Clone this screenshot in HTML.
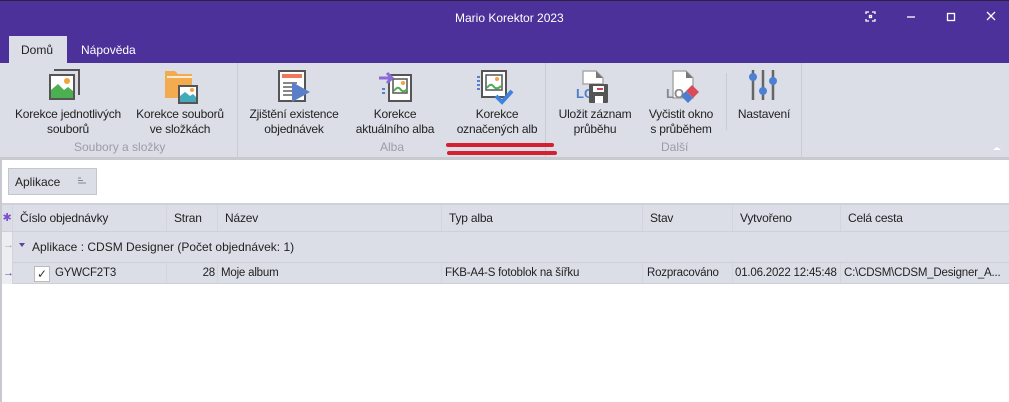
<!DOCTYPE html>
<html><head><meta charset="utf-8"><style>
*{margin:0;padding:0;box-sizing:border-box}
body{width:1009px;height:402px;overflow:hidden;background:#fff;font-family:"Liberation Sans",sans-serif;font-size:12px;color:#222;position:relative}
.abs{position:absolute}
.title{left:0;top:0;width:1009px;height:63px;background:#4b3199;border-top:1px solid #2a2040}
.t{color:#fff;font-size:12px}
.ribbon{left:0;top:63px;width:1009px;height:94px;background:#dcdee7}
.lbl{text-align:center;font-size:12px;line-height:15px;color:#222;white-space:nowrap;letter-spacing:-0.2px}
.grp{color:#9a9ca6;font-size:12px}
.sep{background:#c8cad4;width:1px}
.cell{position:absolute;height:100%;border-right:1px solid #d4d5dc;padding-left:7px;white-space:nowrap;overflow:hidden}
.grid{font-size:11.5px;letter-spacing:-0.2px}
</style></head><body>
<div class="abs title"></div>
<div class="abs t" style="left:455px;top:11px">Mario Korektor 2023</div>
<!-- window controls -->
<svg class="abs" style="left:864px;top:10px" width="150" height="15"><g stroke="#fff" stroke-width="1.3" fill="none">
<path d="M2 4V2h3M8 2h3v2M11 9v2H8M5 11H2V9"/><rect x="5.5" y="5.5" width="2" height="2"/>
<path d="M43 7h8"/><rect x="83.5" y="3.5" width="7" height="7"/><path d="M123 2l8 8M131 2l-8 8"/></g></svg>
<div class="abs" style="left:9px;top:36px;width:58px;height:27px;background:#dcdee7"></div>
<div class="abs" style="left:21px;top:43px;font-size:12px">Domů</div>
<div class="abs t" style="left:81px;top:43px">Nápověda</div>
<div class="abs ribbon"></div>
<div class="abs sep" style="left:237px;top:63px;height:94px"></div>
<div class="abs sep" style="left:545px;top:63px;height:94px"></div>
<div class="abs sep" style="left:726px;top:73px;height:57px"></div>
<div class="abs sep" style="left:801px;top:63px;height:94px"></div>
<!-- icons -->
<svg class="abs" style="left:48px;top:69px" width="36" height="36"><path d="M6 1h25v25" stroke="#555" stroke-width="2" fill="none"/><rect x="2" y="6" width="24" height="24" fill="#fff" stroke="#555" stroke-width="2"/><path d="M3 29v-8l7-6 6 6 4-3 5 4v7z" fill="#4caf50"/><circle cx="19" cy="12" r="3" fill="#f2a33a"/></svg>
<svg class="abs" style="left:162px;top:69px" width="36" height="36"><path d="M3 2h10l3 3h14v24H3z" fill="#f2ac4f"/><path d="M5 8h25" stroke="#fff" stroke-width="1.5"/><rect x="17" y="17" width="18" height="17" fill="#fff" stroke="#555" stroke-width="2"/><path d="M18 33v-6l5-4 5 4 3-2 3 3v5z" fill="#42aab8"/><circle cx="30" cy="21" r="2" fill="#f2a33a"/></svg>
<svg class="abs" style="left:277px;top:69px" width="36" height="36"><rect x="2" y="2" width="26" height="30" fill="#fff" stroke="#555" stroke-width="2"/><rect x="5" y="5" width="20" height="4" fill="#f0785a"/><path d="M6 14h14M6 18h14M6 22h14M6 26h14" stroke="#888" stroke-width="2"/><path d="M15 13l18 10-18 10z" fill="#5b7ec9"/></svg>
<svg class="abs" style="left:378px;top:69px" width="36" height="36"><rect x="11" y="6" width="22" height="26" fill="#fff" stroke="#555" stroke-width="2"/><rect x="15" y="10" width="14" height="14" fill="#fff" stroke="#555" stroke-width="1.5"/><path d="M16 22q4-6 7-1 3 3 6-1" stroke="#4caf50" stroke-width="2" fill="none"/><circle cx="25" cy="14" r="2" fill="#f2a33a"/><path d="M1 9h12M9 4l5 5-5 5" stroke="#8a6bd8" stroke-width="3" fill="none"/><path d="M4 20h3M4 24h3" stroke="#5b7ec9" stroke-width="2"/></svg>
<svg class="abs" style="left:475px;top:69px" width="40" height="36"><rect x="7" y="2" width="24" height="26" fill="#fff" stroke="#555" stroke-width="2"/><rect x="11" y="6" width="16" height="15" fill="#fff" stroke="#555" stroke-width="1.5"/><path d="M12 19q4-6 7-1 3 3 7-1" stroke="#4caf50" stroke-width="2" fill="none"/><circle cx="22" cy="10" r="2" fill="#f2a33a"/><path d="M2 8h3M2 12h3M2 16h3M2 20h3" stroke="#5b7ec9" stroke-width="2"/><path d="M21 27l6 6 10-11" stroke="#3f82dd" stroke-width="4" fill="none"/></svg>
<svg class="abs" style="left:575px;top:69px" width="36" height="36"><path d="M8 2h13l7 7v6H8z" fill="#fff" stroke="#aaa" stroke-width="1.5"/><path d="M21 2v7h7" fill="#777"/><text x="1" y="29" font-family="Liberation Sans" font-size="13" fill="#4a7ec9" font-weight="bold">LC</text><rect x="14" y="15" width="19" height="19" rx="1" fill="#555"/><rect x="18" y="17" width="11" height="6" fill="#fff"/><rect x="22" y="19" width="6" height="2" fill="#d04050"/><rect x="20" y="27" width="8" height="7" fill="#fff"/></svg>
<svg class="abs" style="left:665px;top:69px" width="36" height="36"><path d="M8 2h13l7 7v20H8z" fill="#fff" stroke="#aaa" stroke-width="1.5"/><path d="M21 2v7h7" fill="#777"/><text x="1" y="29" font-family="Liberation Sans" font-size="13" fill="#888" font-weight="bold">LO</text><path d="M27 16l7 7-6 6-7-7z" fill="#d94a5a"/><path d="M21 22l7 7-5 5-7-7z" fill="#4b7ed0"/></svg>
<svg class="abs" style="left:749px;top:69px" width="30" height="32"><path d="M4 1v30M14 1v30M24 1v30" stroke="#666" stroke-width="2.5"/><circle cx="4" cy="8" r="4" fill="#4b80d6"/><circle cx="14" cy="22" r="4" fill="#4b80d6"/><circle cx="24" cy="12" r="4" fill="#4b80d6"/></svg>
<!-- labels -->
<div class="abs lbl" style="left:8px;top:107px;width:120px">Korekce jednotlivých<br>souborů</div>
<div class="abs lbl" style="left:134px;top:107px;width:92px">Korekce souborů<br>ve složkách</div>
<div class="abs grp" style="left:74px;top:140px">Soubory a složky</div>
<div class="abs lbl" style="left:246px;top:107px;width:96px">Zjištění existence<br>objednávek</div>
<div class="abs lbl" style="left:352px;top:107px;width:86px">Korekce<br>aktuálního alba</div>
<div class="abs grp" style="left:380px;top:140px">Alba</div>
<div class="abs lbl" style="left:444px;top:107px;width:106px">Korekce<br>označených alb</div>
<div class="abs lbl" style="left:553px;top:107px;width:84px">Uložit záznam<br>průběhu</div>
<div class="abs lbl" style="left:643px;top:107px;width:76px">Vyčistit okno<br>s průběhem</div>
<div class="abs grp" style="left:661px;top:140px">Další</div>
<div class="abs lbl" style="left:735px;top:107px;width:58px">Nastavení</div>
<div class="abs" style="left:993px;top:147px;width:0;height:0;border-left:4px solid transparent;border-right:4px solid transparent;border-bottom:3px solid #fff"></div>
<!-- red underline -->
<div class="abs" style="left:446px;top:143px;width:108px;height:4px;background:#d52030;border-radius:2px"></div>
<div class="abs" style="left:447px;top:151px;width:110px;height:4px;background:#d52030;border-radius:2px"></div>
<!-- bottom panel -->
<div class="abs" style="left:0;top:157px;width:1009px;height:3px;background:#c9cad0"></div>
<div class="abs" style="left:0;top:160px;width:2px;height:242px;background:#c9cad0"></div>
<div class="abs" style="left:8px;top:168px;width:89px;height:27px;background:#dcdee7;border:1px solid #c4c6ce"></div>
<div class="abs" style="left:15px;top:175px">Aplikace</div>
<svg class="abs" style="left:77px;top:177px" width="10" height="8"><path d="M1 1h3M1 3.5h5M1 6h8" stroke="#888"/></svg>
<!-- header -->
<div class="abs grid" style="left:2px;top:203px;width:1007px;height:29px;background:#dcdee7;border-top:2px solid #d0d1d7;border-bottom:1px solid #cfd0d6;font-size:12px">
 <div class="cell" style="left:0;width:11px;color:#7a50d0;padding-left:0;padding-top:6px;font-size:11px;text-align:center">✱</div>
 <div class="cell" style="left:11px;width:154px;padding-top:6px">Číslo objednávky</div>
 <div class="cell" style="left:165px;width:51px;padding-top:6px">Stran</div>
 <div class="cell" style="left:216px;width:224px;padding-top:6px">Název</div>
 <div class="cell" style="left:440px;width:201px;padding-top:6px">Typ alba</div>
 <div class="cell" style="left:641px;width:90px;padding-top:6px">Stav</div>
 <div class="cell" style="left:731px;width:108px;padding-top:6px">Vytvořeno</div>
 <div class="cell" style="left:839px;width:168px;padding-top:6px;border:none">Celá cesta</div>
</div>
<div class="abs" style="left:2px;top:232px;width:1007px;height:31px;background:#dcdee7;border-bottom:1px solid #cfd0d6"></div>
<div class="abs" style="left:2px;top:232px;width:11px;height:52px;background:#eceef2;border-right:1px solid #d4d5dc"></div>
<div class="abs" style="left:3px;top:239px;color:#a8a0c8;font-size:11px">→</div>
<div class="abs" style="left:19px;top:243px;width:0;height:0;border-left:3.5px solid transparent;border-right:3.5px solid transparent;border-top:4px solid #5a40a8"></div>
<div class="abs" style="left:32px;top:240px">Aplikace : CDSM Designer (Počet objednávek: 1)</div>
<div class="abs grid" style="left:13px;top:263px;width:996px;height:21px;background:#dcdee7;border-bottom:1px solid #cfd0d6">
 <div class="cell" style="left:0;width:154px;padding-left:42px;padding-top:4px">GYWCF2T3</div>
 <div class="cell" style="left:154px;width:51px;text-align:right;padding-right:2px;padding-top:4px">28</div>
 <div class="cell" style="left:205px;width:224px;padding-left:3px;padding-top:4px">Moje album</div>
 <div class="cell" style="left:429px;width:201px;padding-left:3px;padding-top:4px">FKB-A4-S fotoblok na šířku</div>
 <div class="cell" style="left:630px;width:90px;padding-left:4px;padding-top:4px">Rozpracováno</div>
 <div class="cell" style="left:720px;width:108px;padding-left:2px;padding-top:4px">01.06.2022 12:45:48</div>
 <div class="cell" style="left:828px;width:168px;padding-left:3px;padding-top:4px;border:none">C:\CDSM\CDSM_Designer_A...</div>
</div>
<div class="abs" style="left:3px;top:267px;color:#5a40a8;font-size:11px">→</div>
<div class="abs" style="left:34px;top:266px;width:16px;height:16px;background:#fff;border:1px solid #bbb;font-size:12px;text-align:center;line-height:15px;color:#333">✓</div>
</body></html>
